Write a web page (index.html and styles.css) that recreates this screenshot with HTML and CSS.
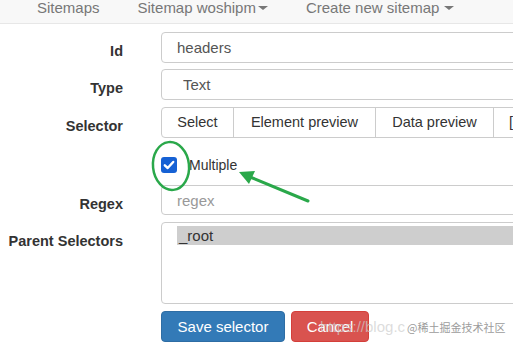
FILE: index.html
```html
<!DOCTYPE html>
<html lang="en">
<head>
    <meta charset="UTF-8">
    <meta name="viewport" content="width=device-width, initial-scale=1.0">
    <title>Edit selector</title>
    <link rel="stylesheet" href="styles.css">
</head>
<body>
    <nav class="navbar">
        <a class="nav-link" href="#">Sitemaps</a>
        <a class="nav-link" href="#">Sitemap woshipm<span class="caret"></span></a>
        <a class="nav-link" href="#">Create new sitemap <span class="caret caret-spaced"></span></a>
    </nav>

    <form class="selector-form">
        <div class="form-row row-id">
            <label class="control-label" for="selector_id">Id</label>
            <input class="form-control" type="text" id="selector_id" value="headers">
        </div>

        <div class="form-row">
            <label class="control-label" for="selector_type">Type</label>
            <select class="form-control select-control" id="selector_type">
                <option>Text</option>
            </select>
        </div>

        <div class="form-row row-flat">
            <label class="control-label">Selector</label>
            <div class="btn-group">
                <button type="button" class="btn btn-select">Select</button>
                <button type="button" class="btn btn-element">Element preview</button>
                <button type="button" class="btn btn-data">Data preview</button>
                <span class="btn btn-value">[data-id]</span>
            </div>
        </div>

        <div class="form-row row-flat">
            <span></span>
            <label class="checkbox">
                <span class="check-box">
                    <svg width="16" height="16" viewBox="0 0 16 16"><path d="M3.8 8.3 L6.7 11 L12.2 5" fill="none" stroke="#fff" stroke-width="2.4" stroke-linecap="round" stroke-linejoin="round"/></svg>
                </span>
                Multiple
            </label>
        </div>

        <div class="form-row">
            <label class="control-label" for="regex">Regex</label>
            <input class="form-control regex-control" type="text" id="regex" placeholder="regex">
        </div>

        <div class="form-row">
            <label class="control-label">Parent Selectors</label>
            <div class="listbox">
                <div class="listbox-option selected">_root</div>
            </div>
        </div>

        <div class="form-row row-flat">
            <span></span>
            <div class="actions">
                <button type="button" class="btn-action btn-save">Save selector</button>
                <button type="button" class="btn-action btn-cancel">Cancel</button>
            </div>
        </div>
    </form>

    <!-- пометки поверх скриншота -->
    <svg class="annotation" width="513" height="347" viewBox="0 0 513 347">
        <ellipse cx="171" cy="166" rx="18" ry="24" transform="rotate(-6 171 166)" fill="none" stroke="#2aa84a" stroke-width="2.5"/>
        <line x1="308" y1="201" x2="250" y2="177" stroke="#2aa84a" stroke-width="3" stroke-linecap="round"/>
        <polygon points="239,172 255,171 249,184" fill="#2aa84a"/>
    </svg>

    <div class="watermark">
        <span class="watermark-url">https://blog.c</span>
        <span class="watermark-site">@稀土掘金技术社区</span>
    </div>
</body>
</html>
```

FILE: styles.css
```css
html, body {
    overflow: hidden;
}

body {
    margin: 0;
    font-family: 'Liberation Sans', Arial, sans-serif;
    color: #333;
    background-color: #fff;
    position: relative;
    width: 513px;
    height: 347px;
}

/* Верхнее меню */
.navbar {
    display: flex;
    height: 23px;
    padding-left: 18px;
    background-color: #f8f8f8;
    border-bottom: 1px solid #e7e7e7;
}

.nav-link {
    padding: 0 19px;
    font-size: 15px;
    line-height: 15px;
    color: #777;
    text-decoration: none;
    white-space: nowrap;
}

.caret {
    display: inline-block;
    width: 0;
    height: 0;
    margin-left: 2px;
    vertical-align: 3px;
    border-top: 4px solid #777;
    border-left: 5px solid transparent;
    border-right: 5px solid transparent;
}

.caret-spaced {
    margin-left: 0;
}

/* Форма */
.selector-form {
    width: 800px;
    margin-top: 8px;
}

.form-row {
    display: grid;
    grid-template-columns: 123px 1fr;
    column-gap: 38px;
    margin-bottom: 7px;
}

.row-id {
    margin-bottom: 6px;
}

.row-flat {
    margin-bottom: 0;
}

.control-label {
    text-align: right;
    font-weight: bold;
    font-size: 14.5px;
    line-height: 20px;
    padding-top: 9px;
    white-space: nowrap;
}

.form-control {
    height: 31px;
    box-sizing: border-box;
    padding: 0 15px;
    border: 1px solid #ccc;
    border-radius: 4px;
    font-family: 'Liberation Sans', Arial, sans-serif;
    font-size: 15px;
    color: #555;
    background-color: #fff;
    outline: none;
}

.select-control {
    -webkit-appearance: none;
    appearance: none;
    padding-left: 21px;
}

.regex-control {
    height: 30px;
}

.regex-control::placeholder {
    color: #999;
}

/* Группа кнопок селектора */
.btn-group {
    display: flex;
    height: 31px;
}

.btn {
    box-sizing: border-box;
    height: 31px;
    margin-left: -1px;
    padding: 0;
    border: 1px solid #ccc;
    background-color: #fff;
    color: #333;
    font-family: 'Liberation Sans', Arial, sans-serif;
    font-size: 14.5px;
    line-height: 29px;
    text-align: center;
    white-space: nowrap;
}

.btn-select {
    width: 73px;
    margin-left: 0;
    border-radius: 4px 0 0 4px;
}

.btn-element {
    width: 143px;
}

.btn-data {
    width: 119px;
}

.btn-value {
    width: 120px;
    padding-left: 15px;
    text-align: left;
}

/* Чекбокс */
.checkbox {
    display: flex;
    align-items: center;
    padding: 19px 0 12px;
    font-size: 14px;
    line-height: 16px;
    color: #333;
}

.check-box {
    display: block;
    width: 16px;
    height: 16px;
    margin-right: 12px;
    border-radius: 3px;
    background-color: #1661d4;
}

.check-box svg {
    display: block;
}

/* Список родительских селекторов */
.listbox {
    height: 82px;
    box-sizing: border-box;
    padding: 3px 0 0 15px;
    border: 1px solid #ccc;
    border-radius: 4px;
}

.listbox-option {
    padding-left: 2px;
    font-size: 15px;
    line-height: 19px;
    color: #333;
}

.listbox-option.selected {
    background-color: #cecece;
}

/* Кнопки сохранения */
.actions {
    display: flex;
    gap: 6px;
}

.btn-action {
    height: 31px;
    box-sizing: border-box;
    padding: 0;
    border-radius: 4px;
    font-family: 'Liberation Sans', Arial, sans-serif;
    font-size: 15px;
    color: #fff;
    cursor: pointer;
}

.btn-save {
    width: 124px;
    background-color: #337ab7;
    border: 1px solid #2e6da4;
}

.btn-cancel {
    width: 78px;
    background-color: #d9534f;
    border: 1px solid #d43f3a;
}

/* Пометки и водяной знак */
.annotation {
    position: absolute;
    top: 0;
    left: 0;
    pointer-events: none;
}

.watermark {
    position: absolute;
    left: 320px;
    top: 318px;
    display: flex;
    align-items: center;
    white-space: nowrap;
    pointer-events: none;
}

.watermark-url {
    font-size: 15px;
    color: rgba(205, 205, 205, 0.7);
}

.watermark-site {
    margin-left: 2px;
    font-family: 'Noto Sans CJK SC', 'Liberation Sans', sans-serif;
    font-size: 11px;
    color: #9c9c9c;
}
```
